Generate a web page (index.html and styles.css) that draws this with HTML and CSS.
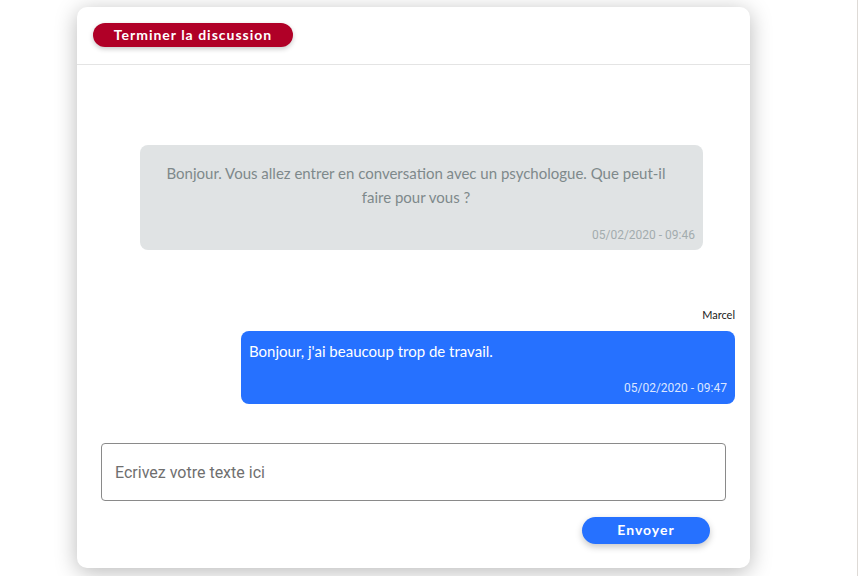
FILE: index.html
```html
<!DOCTYPE html>
<html lang="fr">
<head>
<meta charset="utf-8">
<title>Discussion</title>
<link rel="stylesheet" href="styles.css">
</head>
<body>
<div class="page">
  <div class="card">
    <header class="card-header">
      <button class="btn btn-end">Terminer la discussion</button>
    </header>
    <section class="messages">
      <div class="bubble bubble-system">
        <p class="bubble-text">Bonjour. Vous allez entrer en conversation avec un psychologue. Que peut-il faire pour vous ?</p>
        <div class="stamp">05/02/2020 - 09:46</div>
      </div>
      <div class="author">Marcel</div>
      <div class="bubble bubble-user">
        <p class="bubble-text">Bonjour, j'ai beaucoup trop de travail.</p>
        <div class="stamp">05/02/2020 - 09:47</div>
      </div>
    </section>
    <form class="composer">
      <input class="composer-input" type="text" placeholder="Ecrivez votre texte ici">
      <div class="composer-actions">
        <button type="button" class="btn btn-send">Envoyer</button>
      </div>
    </form>
  </div>
</div>
</body>
</html>
```
FILE: styles.css
```css
* { box-sizing: border-box; }
html, body { margin: 0; padding: 0; background: #fff; }
body { font-family: "Lato", "Noto Sans", sans-serif; }

.page {
  width: 858px;
  height: 576px;
  border-right: 1px solid #dedad6;
  padding: 7px 0 0 77px;
}

.card {
  width: 673px;
  height: 561px;
  background: #fff;
  border-radius: 10px;
  box-shadow: 0 4px 22px rgba(0, 0, 0, 0.28);
  display: flex;
  flex-direction: column;
}

.card-header {
  padding: 16px 16px 17px;
  border-bottom: 1px solid #e4e4e4;
}

.btn {
  border: none;
  color: #fff;
  font-family: "Lato", "Noto Sans", sans-serif;
  font-weight: 700;
  font-size: 14px;
  letter-spacing: 1px;
  cursor: pointer;
  padding: 0 0 2px;
}

.btn-end {
  width: 200px;
  height: 24px;
  border-radius: 12px;
  background: #b00027;
  box-shadow: 0 2px 5px rgba(0, 0, 0, 0.22);
}

.messages {
  display: flex;
  flex-direction: column;
  padding: 80px 15px 0 63px;
}

.bubble {
  border-radius: 8px;
  padding: 16px 8px 8px;
}

.bubble-text {
  margin: 0;
  font-size: 15px;
  line-height: 24px;
}

.stamp {
  font-family: "Roboto", sans-serif;
  font-size: 12px;
  line-height: 16px;
  text-align: right;
  margin-top: 18px;
}

.bubble-system {
  width: 563px;
  height: 105px;
  background: #e0e3e4;
  color: #7e898b;
}
.bubble-system .bubble-text {
  text-align: center;
  padding: 0 20px 0 9px;
}
.bubble-system .stamp { color: #a3acae; }

.author {
  align-self: flex-end;
  margin-top: 58px;
  font-size: 11px;
  line-height: 14px;
  color: #1a1a1a;
}

.bubble-user {
  align-self: flex-end;
  width: 494px;
  height: 73px;
  margin-top: 9px;
  background: #2671ff;
  color: #fff;
  padding-top: 8px;
}
.bubble-user .stamp { color: #dbe6ff; margin-top: 17px; }

.composer {
  margin: 39px 24px 0;
}

.composer-input {
  display: block;
  width: 625px;
  height: 58px;
  border: 1px solid #8a8a8a;
  border-radius: 4px;
  padding: 0 13px;
  font-family: "Roboto", sans-serif;
  font-size: 16px;
  color: #333;
  outline: none;
}
.composer-input::placeholder { color: #6f6f6f; }

.composer-actions {
  display: flex;
  justify-content: flex-end;
  padding-right: 16px;
  margin-top: 16px;
}

.btn-send {
  width: 128px;
  height: 27px;
  border-radius: 14px;
  background: #2671ff;
  box-shadow: 0 3px 7px rgba(0, 0, 0, 0.22);
}
```
